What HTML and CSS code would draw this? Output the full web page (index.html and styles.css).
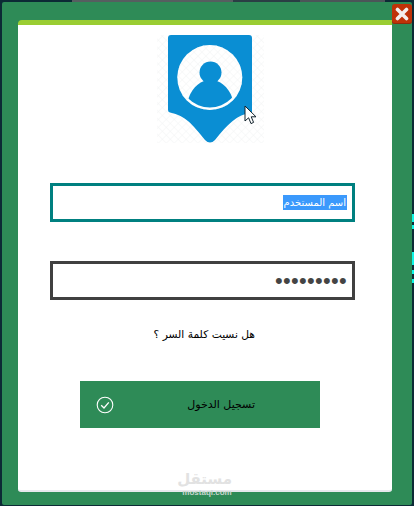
FILE: index.html
```html
<!DOCTYPE html>
<html lang="ar" dir="rtl">
<head>
<meta charset="utf-8">
<title>تسجيل الدخول</title>
<link rel="stylesheet" href="styles.css">
</head>
<body>
<div class="frame">
  <a class="close" aria-label="إغلاق">
    <svg width="14" height="14" viewBox="0 0 14 14"><path d="M2.5 2.5L11.5 11.5M11.5 2.5L2.5 11.5" stroke="#f4efec" stroke-width="3.6" stroke-linecap="round"/></svg>
  </a>
  <div class="panel">
    <div class="logo">
      <svg width="107" height="108" viewBox="157 35 107 108">
        <defs>
          <pattern id="hatch" width="5.6" height="5.6" patternUnits="userSpaceOnUse" patternTransform="rotate(45)">
            <path d="M0 0H5.6M0 0V5.6" stroke="#f2f3f4" stroke-width="1" fill="none"/>
          </pattern>
          <clipPath id="inner"><circle cx="209.8" cy="77.5" r="30"/></clipPath>
        </defs>
        <rect x="157" y="35" width="107" height="108" fill="url(#hatch)"/>
        <path d="M171 35H249a3 3 0 0 1 3 3V112.500C236 115 228 124 215 140Q210 145 205 140C192 124 186 116 170 112.500Q168 112 168 110V38a3 3 0 0 1 3-3Z" fill="#0a8ed3"/>
        <circle cx="209.800" cy="77.500" r="32.500" fill="#fff"/>
        <circle cx="209.800" cy="77.500" r="32.500" fill="url(#hatch)"/>
        <g clip-path="url(#inner)" fill="#0a8ed3">
          <circle cx="210.500" cy="72.500" r="11"/>
          <path d="M186 112C187 95 194 85 204 81H217C227 85 234 95 235 112Z"/>
        </g>
      </svg>
    </div>
    <div class="field field-active"><span class="selected">اسم المستخدم</span></div>
    <div class="field field-pass"><span class="dots">•••••••••</span></div>
    <p class="forgot">هل نسيت كلمة السر ؟</p>
    <button class="submit" type="button">
      <span class="submit-label">تسجيل الدخول</span>
      <svg class="submit-icon" width="18" height="18" viewBox="0 0 18 18" fill="none" stroke="#fff" stroke-width="1.1"><circle cx="9" cy="9" r="7.8"/><path d="M5.2 9.2L8 12L12.8 6.4" stroke-width="1.3"/></svg>
    </button>
  </div>
  <span class="wm-ar">مستقل</span>
  <span class="wm-en">mostaql.com</span>
  <svg class="cursor" width="14" height="20" viewBox="0 0 14 20"><path d="M1 1V16L4.6 12.8L7 18.6L9.6 17.4L7.2 11.8H12Z" fill="#fff" stroke="#12222c" stroke-width="1"/></svg>
</div>
</body>
</html>
```
FILE: styles.css
```css
* { box-sizing: border-box; }
html, body { height: 100%; }
body {
  margin: 0;
  padding: 2px 2px 1px;
  overflow: hidden;
  background-color: #0c2a35;
  background-image:
    linear-gradient(180deg, transparent 214px, #0ff5e6 214px, #0ff5e6 222px, transparent 222px, transparent 225px, #0ff5e6 225px, #0ff5e6 229px, transparent 229px, transparent 252px, #0ff5e6 252px, #0ff5e6 265px, transparent 265px, transparent 270px, #0ff5e6 270px, #0ff5e6 274px, transparent 274px, transparent 279px, #0ff5e6 279px, #0ff5e6 283px, transparent 283px),
    linear-gradient(90deg, transparent 72px, #565f60 72px, #565f60 233px, #2a3e44 233px, #2a3e44 300px, #4b5558 300px, #4b5558 385px, transparent 385px);
  background-size: 2px 100%, 100% 2px;
  background-position: right top, left top;
  background-repeat: no-repeat;
  font-family: "DejaVu Sans", "Noto Sans", sans-serif;
}
.frame {
  position: relative;
  height: 503px;
  padding: 18px 20px 13px 16px;
  background: #2e8b57;
  border-radius: 2px;
}
.panel {
  position: relative;
  height: 100%;
  display: flex;
  flex-direction: column;
  align-items: flex-start;
  padding-top: 10px;
  background: #fff;
  border-top: 5px solid #9acd32;
  border-bottom: 2px solid #e6e8ec;
  border-radius: 4px 0 3px 3px;
}
.logo { height: 108px; line-height: 0; margin: 0 128px 40px 0; }
.field {
  width: 305px;
  height: 39px;
  display: flex;
  align-items: center;
  margin-right: 37px;
  padding: 0 5px;
  border: 3px solid #008080;
  font-size: 10px;
}
.field-pass { margin-top: 39px; border-color: #404040; }
.selected {
  display: block;
  height: 15px;
  line-height: 15px;
  padding: 0 1px;
  background: #3b99fc;
  color: #fff;
  white-space: nowrap;
}
.dots {
  font-family: "Liberation Sans", sans-serif;
  font-size: 22px;
  line-height: 22px;
  letter-spacing: 0.3px;
  color: #444;
}
.forgot {
  margin: 26px 137px 0 0;
  height: 17px;
  line-height: 17px;
  font-size: 10.7px;
  color: #000;
}
.submit {
  position: relative;
  width: 240px;
  height: 47px;
  margin: 38px 72px 0 0;
  padding: 0;
  border: 0;
  background: #2e8b57;
  color: #000;
  font: 11px "DejaVu Sans", sans-serif;
}
.submit-label { display: block; padding-right: 65px; text-align: right; }
.submit-icon { position: absolute; left: 16px; top: 15px; }
.wm-ar {
  position: absolute;
  left: 180px;
  top: 468px;
  width: 50px;
  font-size: 15px;
  font-weight: 700;
  line-height: 18px;
  text-align: center;
  color: #e2e2e2;
}
.wm-en {
  position: absolute;
  left: 180px;
  top: 488px;
  width: 50px;
  font: 700 8px/6px "Liberation Sans", sans-serif;
  text-align: center;
  color: #c8d6ce;
  direction: ltr;
}
.close {
  position: absolute;
  top: 2px;
  right: 0;
  z-index: 2;
  width: 20px;
  height: 20px;
  display: flex;
  align-items: center;
  justify-content: center;
  background: #bf3208;
  border-radius: 3px;
  box-shadow: inset 0 -1px 0 #8f2a0a;
}
.cursor { position: absolute; left: 242px; top: 103px; z-index: 2; }
```
